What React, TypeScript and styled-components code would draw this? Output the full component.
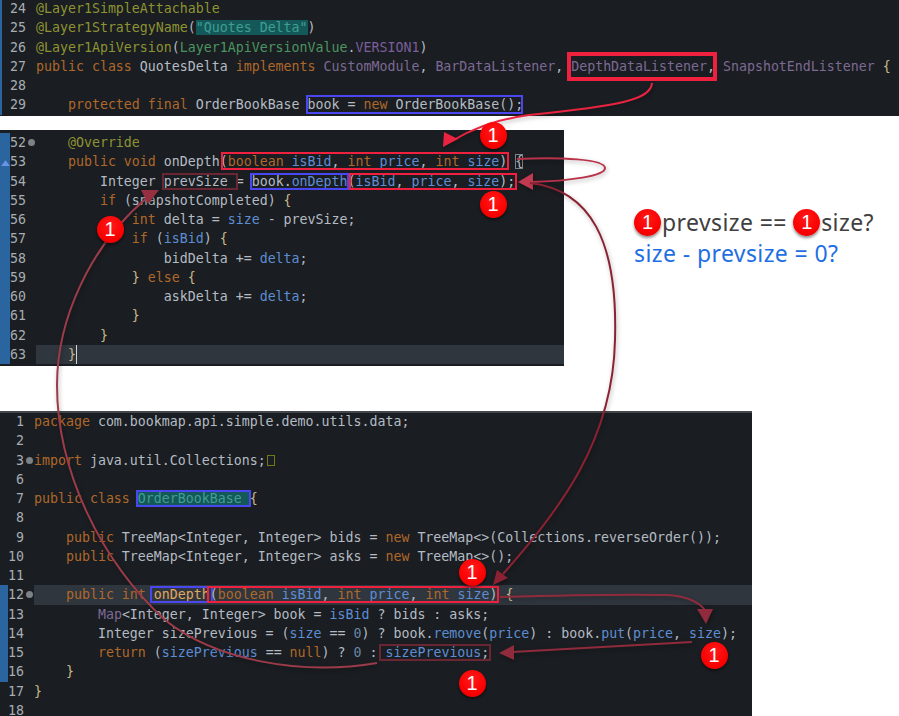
import React from "react";
import styled, { createGlobalStyle } from "styled-components";

const Global = createGlobalStyle`
  html, body { margin: 0; padding: 0; background: #fff; }
`;

const Page = styled.div`
  position: relative;
  width: 899px;
  height: 716px;
  overflow: hidden;
  background: #fff;
`;

const Panel = styled.section<{ $width: number; $height: number; $mt: number; $pt: number; $edge?: boolean }>`
  width: ${(p) => p.$width}px;
  height: ${(p) => p.$height}px;
  margin-top: ${(p) => p.$mt}px;
  padding-top: ${(p) => p.$pt}px;
  box-sizing: border-box;
  overflow: hidden;
  flex: none;
  background: #1a1d21;
  box-shadow: ${(p) => (p.$edge ? "inset 0 2px 0 #43474c" : "none")};
  font: 13.28px/19.25px "DejaVu Sans Mono", "Liberation Mono", monospace;
  color: #b4bbc3;
`;

const ScrolledLines = styled.div`
  margin-top: -1px;
`;

const Row = styled.div`
  display: flex;
  height: 19.25px;
  white-space: pre;
`;

const Marker = styled.span<{ $w: number; $on?: boolean; $up?: boolean }>`
  position: relative;
  flex: none;
  width: ${(p) => p.$w}px;
  background: ${(p) => (p.$on ? "#2a659f" : "transparent")};
  &::after {
    content: "";
    display: ${(p) => (p.$up ? "block" : "none")};
    position: absolute;
    left: 1px;
    top: 8px;
    width: 9px;
    height: 6px;
    background: #6b93e6;
    clip-path: polygon(50% 0, 100% 100%, 0 100%);
  }
`;

const Num = styled.span<{ $w: number }>`
  flex: none;
  width: ${(p) => p.$w}px;
  text-align: right;
  color: #a7adb3;
`;

const FoldSlot = styled.span`
  flex: none;
  width: 10px;
  display: flex;
  align-items: center;
  justify-content: center;
`;

const FoldDot = styled.i`
  width: 7px;
  height: 7px;
  border-radius: 50%;
  background: #7d8288;
`;

const Code = styled.code<{ $current?: boolean }>`
  flex: 1;
  font: inherit;
  background: ${(p) => (p.$current ? "#30363e" : "transparent")};
`;

const Kw = styled.span`color: #b0682a;`;
const Ann = styled.span`color: #8d9333;`;
const Cls = styled.span`color: #7d6a94;`;
const Enm = styled.span`color: #4c9560;`;
const Cst = styled.span`color: #7b5f9c;`;
const Var = styled.span`color: #5d8dd3;`;
const Num0 = styled.span`color: #6a87a8;`;
const Warm = styled.span`color: #c9b98b;`;
const Sel = styled.span`
  background: #14585a;
  color: #3f9f92;
`;
const Hot = styled.span`color: #e0a85e;`;

const Box = styled.span<{ $c: string; $b?: number; $i?: string }>`
  position: relative;
  &::after {
    content: "";
    position: absolute;
    inset: ${(p) => p.$i ?? "-1px -1px -1px -1px"};
    border: ${(p) => p.$b ?? 2}px solid ${(p) => p.$c};
    pointer-events: none;
  }
`;

const Caret = styled.span`
  display: inline-block;
  width: 1px;
  height: 19px;
  vertical-align: top;
  background: #d0d3d6;
`;

const Collapsed = styled.span`
  display: inline-block;
  width: 6px;
  height: 9px;
  margin: 0 0 -1px 1px;
  border: 1px solid #6f7a12;
`;

const SecondRow = styled.div`
  display: flex;
`;

const Note = styled.div`
  margin-top: 14px;
  padding: 77px 0 0 70px;
  font: 23px/31px "Noto Sans", "Open Sans", sans-serif;
  letter-spacing: 0.4px;
  white-space: pre;
`;

const NoteLine = styled.div<{ $blue?: boolean }>`
  color: ${(p) => (p.$blue ? "#1f6fe3" : "#404040")};
`;

const BadgeShape = styled.span`
  width: 27px;
  height: 27px;
  border-radius: 50%;
  background: radial-gradient(circle at 50% 35%, #ff1a1a 0%, #f80000 65%, #dd0000 100%);
  box-shadow: 0 2px 3px rgba(0, 0, 0, 0.45);
  color: #fff;
  font: 20px/27px "Liberation Sans", Arial, sans-serif;
  letter-spacing: 0;
  text-align: center;
`;

const Badge = styled(BadgeShape)<{ $x: number; $y: number }>`
  position: absolute;
  left: ${(p) => p.$x - 13.5}px;
  top: ${(p) => p.$y - 13.5}px;
`;

const InlineBadge = styled(BadgeShape)<{ $gap: number; $after: number }>`
  display: inline-block;
  vertical-align: top;
  margin: 2px ${(p) => p.$after}px 0 ${(p) => p.$gap}px;
`;

const Overlay = styled.svg`
  position: absolute;
  left: 0;
  top: 0;
  width: 899px;
  height: 716px;
  pointer-events: none;
`;

const Arrow = styled.path<{ $c: string; $w?: number }>`
  fill: none;
  stroke: ${(p) => p.$c};
  stroke-width: ${(p) => p.$w ?? 2};
`;

const Head = styled.polygon<{ $c: string }>`
  fill: ${(p) => p.$c};
`;

const Shadowed = styled.g`
  filter: drop-shadow(1px 2px 2px rgba(0, 0, 0, 0.3));
`;

const RED = "#f0203f";
const BLUE = "#4a46f0";
const WINE = "#6b2634";

type LineProps = {
  n?: number;
  w: number;
  m: number;
  on?: boolean;
  up?: boolean;
  fold?: boolean;
  current?: boolean;
  children?: React.ReactNode;
};

const Line = ({ n, w, m, on, up, fold, current, children }: LineProps) => (
  <Row>
    <Marker $w={m} $on={on} $up={up} />
    <Num $w={w - m}>{n}</Num>
    <FoldSlot>{fold && <FoldDot />}</FoldSlot>
    <Code $current={current}>{children}</Code>
  </Row>
);

const L1 = (p: Omit<LineProps, "w" | "m">) => <Line {...p} w={26} m={2} on />;
const L2 = (p: Omit<LineProps, "w" | "m">) => <Line {...p} w={26} m={10} on />;
const L3 = (p: Omit<LineProps, "w" | "m">) => <Line {...p} w={24} m={8} />;

export default function App() {
  return (
    <Page>
      <Global />
      <Panel $width={899} $height={116} $mt={0} $pt={0}>
        <ScrolledLines>
          <L1 n={24}><Ann>@Layer1SimpleAttachable</Ann></L1>
          <L1 n={25}><Ann>@Layer1StrategyName</Ann>(<Sel>"Quotes Delta"</Sel>)</L1>
          <L1 n={26}><Ann>@Layer1ApiVersion</Ann>(<Enm>Layer1ApiVersionValue</Enm>.<Cst>VERSION1</Cst>)</L1>
          <L1 n={27}>
            <Kw>public class</Kw> QuotesDelta <Kw>implements</Kw> <Cls>CustomModule</Cls>, <Cls>BarDataListener</Cls>,{" "}
            <Box $c={RED} $b={4} $i="-7px -2px -7px -4px"><Cls>DepthDataListener</Cls>,</Box> <Cls>SnapshotEndListener</Cls> <Warm>{"{"}</Warm>
          </L1>
          <L1 n={28} />
          <L1 n={29}>
            {"    "}<Kw>protected final</Kw> OrderBookBase{" "}
            <Box $c={BLUE} $i="-2px 0 -2px -2px">book = <Kw>new</Kw> OrderBookBase();</Box>
          </L1>
        </ScrolledLines>
      </Panel>

      <SecondRow>
        <Panel $width={564} $height={236} $mt={14} $pt={3}>
          <L2 n={52} fold>{"    "}<Ann>@Override</Ann></L2>
          <L2 n={53} up>
            {"    "}<Kw>public void</Kw> onDepth<Box $c={RED} $i="-2px -2px -1px 1px">(<Kw>boolean</Kw> <Var>isBid</Var>, <Kw>int</Kw> <Var>price</Var>, <Kw>int</Kw> <Var>size</Var>)</Box>{" "}
            <Box $c="#7f8488" $b={1} $i="0 0 0 0">{"{"}</Box>
          </L2>
          <L2 n={54}>
            {"        "}Integer <Box $c={WINE} $i="-1px -2px -1px -2px">prevSize </Box>= <Box $c={BLUE} $i="-1px -1px -1px -2px">book.<Var>onDepth</Var></Box><Box $c={RED} $i="-1px -2px -1px 1px">(<Var>isBid</Var>, <Var>price</Var>, <Var>size</Var>);</Box>
          </L2>
          <L2 n={55}>{"        "}<Kw>if</Kw> (snapshotCompleted) <Warm>{"{"}</Warm></L2>
          <L2 n={56}>{"            "}<Kw>int</Kw> delta = <Var>size</Var> - prevSize;</L2>
          <L2 n={57}>{"            "}<Kw>if</Kw> (<Var>isBid</Var>) <Warm>{"{"}</Warm></L2>
          <L2 n={58}>{"                "}bidDelta += <Var>delta</Var>;</L2>
          <L2 n={59}>{"            "}<Warm>{"}"}</Warm> <Kw>else</Kw> <Warm>{"{"}</Warm></L2>
          <L2 n={60}>{"                "}askDelta += <Var>delta</Var>;</L2>
          <L2 n={61}>{"            "}<Warm>{"}"}</Warm></L2>
          <L2 n={62}>{"        "}<Warm>{"}"}</Warm></L2>
          <L2 n={63} current>{"    "}<Warm>{"}"}</Warm><Caret /></L2>
        </Panel>
        <Note>
          <NoteLine>
            <InlineBadge $gap={0} $after={1}>1</InlineBadge>prevsize =={" "}
            <InlineBadge $gap={0} $after={1}>1</InlineBadge>size?
          </NoteLine>
          <NoteLine $blue>size - prevsize = 0?</NoteLine>
        </Note>
      </SecondRow>

      <Panel $width={752} $height={305} $mt={45} $pt={1} $edge>
        <L3 n={1}><Kw>package</Kw> com.bookmap.api.simple.demo.utils.data;</L3>
        <L3 n={2} />
        <L3 n={3} fold><Kw>import</Kw> java.util.Collections;<Collapsed /></L3>
        <L3 n={6} />
        <L3 n={7}>
          <Kw>public class</Kw> <Box $c={BLUE} $i="-1px -1px -1px -2px"><Sel>OrderBookBase </Sel></Box><Warm>{"{"}</Warm>
        </L3>
        <L3 n={8} />
        <L3 n={9}>{"    "}<Kw>public</Kw> TreeMap&lt;Integer, Integer&gt; bids = <Kw>new</Kw> TreeMap&lt;&gt;(Collections.reverseOrder());</L3>
        <L3 n={10}>{"    "}<Kw>public</Kw> TreeMap&lt;Integer, Integer&gt; asks = <Kw>new</Kw> TreeMap&lt;&gt;();</L3>
        <L3 n={11} />
        <Line n={12} w={24} m={8} on fold current>
          {"    "}<Kw>public int</Kw> <Box $c={BLUE} $i="-1px -3px -1px -4px"><Hot>onDepth</Hot></Box><Box $c={RED} $i="-1px -2px -1px -3px">(<Kw>boolean</Kw> <Var>isBid</Var>, <Kw>int</Kw> <Var>price</Var>, <Kw>int</Kw> <Var>size</Var>)</Box> <Warm>{"{"}</Warm>
        </Line>
        <Line n={13} w={24} m={8} on>{"        "}<Cls>Map</Cls>&lt;Integer, Integer&gt; book = <Var>isBid</Var> ? bids : asks;</Line>
        <Line n={14} w={24} m={8} on>{"        "}Integer sizePrevious = (<Var>size</Var> == <Num0>0</Num0>) ? book.<Var>remove</Var>(<Var>price</Var>) : book.<Var>put</Var>(<Var>price</Var>, <Var>size</Var>);</Line>
        <Line n={15} w={24} m={8} on>{"        "}<Kw>return</Kw> (<Var>sizePrevious</Var> == <Kw>null</Kw>) ? <Num0>0</Num0> : <Box $c={WINE} $i="-1px -2px -1px -6px"><Var>sizePrevious</Var>;</Box></Line>
        <Line n={16} w={24} m={8} on>{"    "}<Warm>{"}"}</Warm></Line>
        <L3 n={17}><Warm>{"}"}</Warm></L3>
        <L3 n={18} />
      </Panel>

      <Overlay viewBox="0 0 899 716">
        <Shadowed>
          <Arrow $c="#ea2340" d="M652 83 C651 100 618 106 529 115 C498 119 475 127 452 141" />
          <Head $c="#ea2340" points="444,132 458,139 443,147" />
        </Shadowed>
        <Shadowed>
          <Arrow $c="#b93249" d="M517 159 C560 157 605 159 605 168 C605 176 570 181 530 182" />
          <Head $c="#c13a50" points="518,182 533,173 533,190" />
        </Shadowed>
        <Shadowed>
          <Arrow $c="#8b2233" d="M530 183 C590 190 618 240 615 340 C613 440 560 510 503 574" />
          <Head $c="#8b2233" points="493,585 497,570 508,578" />
        </Shadowed>
        <Shadowed>
          <Arrow $c="#9c3b4a" d="M148 197 C90 245 57 320 57 385 C57 470 100 560 165 620 C215 660 300 676 377 663" />
          <Head $c="#963040" points="159,190 141,190 148,204" />
        </Shadowed>
        <Shadowed>
          <Arrow $c="#8f2b3c" d="M500 597 C570 595 620 594 667 595 C685 596 698 601 705 610" />
          <Head $c="#8f2b3c" points="697,609 713,609 706,624" />
        </Shadowed>
        <Shadowed>
          <Arrow $c="#8f2b3c" d="M692 642 L512 652" />
          <Head $c="#8f2b3c" points="499,653 514,645 514,660" />
        </Shadowed>
      </Overlay>

      <Badge $x={493} $y={135}>1</Badge>
      <Badge $x={493} $y={204}>1</Badge>
      <Badge $x={110} $y={229}>1</Badge>
      <Badge $x={472} $y={572}>1</Badge>
      <Badge $x={714} $y={655}>1</Badge>
      <Badge $x={472} $y={683}>1</Badge>
    </Page>
  );
}
